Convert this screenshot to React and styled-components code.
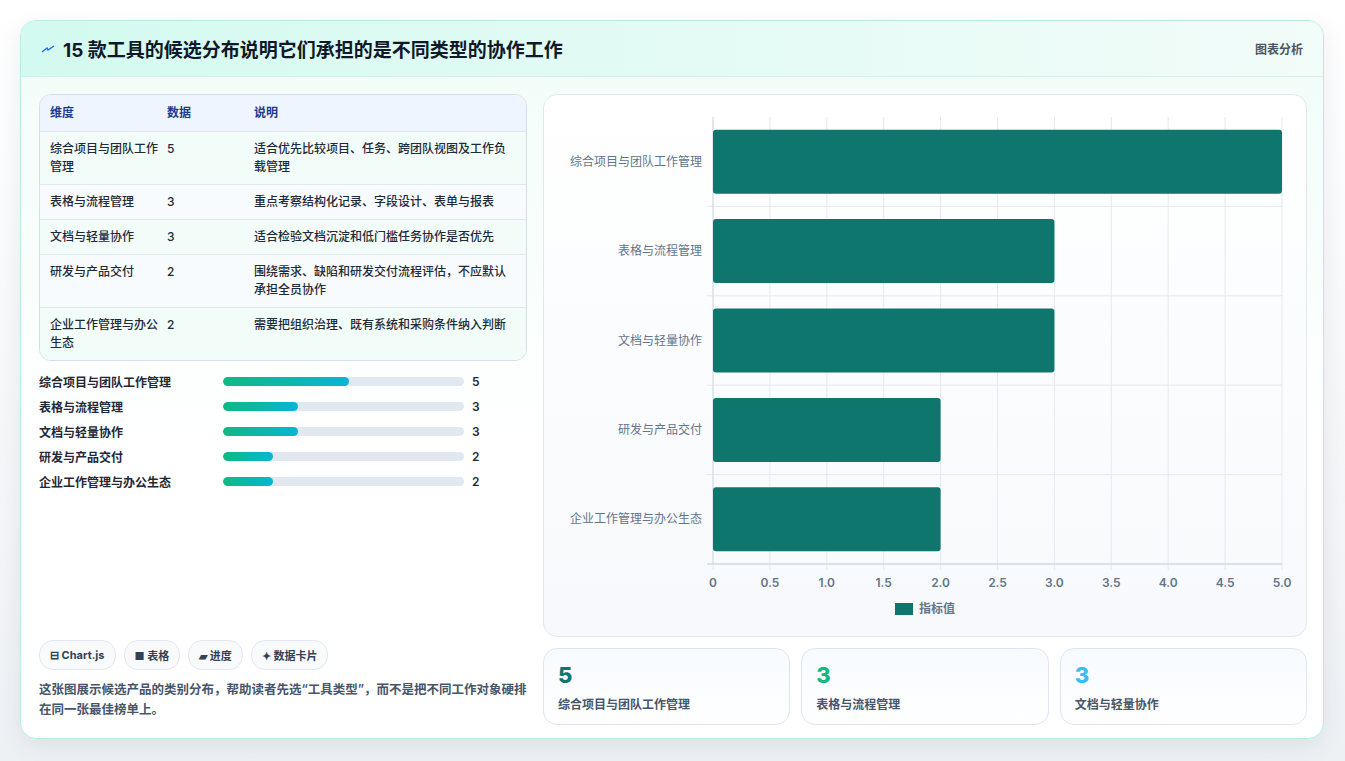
import styled, { createGlobalStyle } from "styled-components";

const Global = createGlobalStyle`
  body { margin: 0; background: #f3f5f7; font-family: Inter, "Noto Sans CJK SC", sans-serif; }
`;

const rows = [
  { name: "综合项目与团队工作管理", value: 5, note: "适合优先比较项目、任务、跨团队视图及工作负载管理" },
  { name: "表格与流程管理", value: 3, note: "重点考察结构化记录、字段设计、表单与报表" },
  { name: "文档与轻量协作", value: 3, note: "适合检验文档沉淀和低门槛任务协作是否优先" },
  { name: "研发与产品交付", value: 2, note: "围绕需求、缺陷和研发交付流程评估，不应默认承担全员协作" },
  { name: "企业工作管理与办公生态", value: 2, note: "需要把组织治理、既有系统和采购条件纳入判断" },
];

const Page = styled.div`
  width: 1345px;
  height: 761px;
  padding: 20px;
  box-sizing: border-box;
  background: linear-gradient(180deg, #ffffff 0%, #eef1f4 100%);
`;

const Card = styled.div`
  width: 1304px;
  height: 719px;
  box-sizing: border-box;
  border: 1px solid #b9ecdf;
  border-radius: 16px;
  background: linear-gradient(180deg, #f0fdf8 0%, #ffffff 60%);
  box-shadow: 0 8px 24px rgba(15, 40, 60, 0.08);
  overflow: hidden;
  display: flex;
  flex-direction: column;
`;

const Header = styled.div`
  height: 55px;
  flex: none;
  display: flex;
  align-items: center;
  justify-content: space-between;
  padding: 0 20px 0 20px;
  background: linear-gradient(90deg, #d3faf0 0%, #e6fbf5 60%, #f2fcf9 100%);
  border-bottom: 1px solid #d3f1e8;
`;

const Title = styled.h1`
  margin: 0;
  font-size: 19px;
  font-weight: 700;
  color: #111827;
  display: flex;
  align-items: center;
  gap: 8px;
`;

const HeaderTag = styled.span`
  font-size: 12px;
  color: #4b5563;
  font-weight: 600;
`;

const Body = styled.div`
  flex: 1;
  display: grid;
  grid-template-columns: 488px 1fr;
  gap: 16px;
  padding: 17px 18px 18px 18px;
  min-height: 0;
`;

const Left = styled.div`
  display: flex;
  flex-direction: column;
  min-height: 0;
`;

const Table = styled.div`
  border: 1px solid #d5dee9;
  border-radius: 12px;
  overflow: hidden;
  background: #fff;
`;

const Row = styled.div`
  display: grid;
  grid-template-columns: 117px 87px 1fr;
  padding: ${(p) => (p.$head ? "9px 10px" : "8px 10px")};
  min-height: ${(p) => (p.$head ? "15px" : "18px")};
  align-items: start;
  font-size: 12px;
  line-height: 18px;
  color: ${(p) => (p.$head ? "#1e3a8a" : "#1f2937")};
  font-weight: ${(p) => (p.$head ? 600 : 500)};
  background: ${(p) => (p.$head ? "#eef5fe" : p.$alt ? "#f7fbfd" : "#f2fdf9")};
  border-top: ${(p) => (p.$head ? "none" : "1px solid #e0e7ef")};
`;

const Bars = styled.div`
  display: flex;
  flex-direction: column;
  gap: 7px;
  margin-top: 11px;
`;

const BarRow = styled.div`
  display: grid;
  grid-template-columns: 176px 241px 1fr;
  gap: 0 8px;
  align-items: center;
  font-size: 12px;
  font-weight: 600;
  color: #1f2937;
  height: 18px;
`;

const Track = styled.div`
  height: 9px;
  border-radius: 5px;
  background: #e2e8f0;
  overflow: hidden;
`;

const Fill = styled.div`
  height: 100%;
  border-radius: 5px;
  background: linear-gradient(90deg, #10b981, #06b6d4);
`;

const Footer = styled.div`
  margin-top: auto;
  display: flex;
  flex-direction: column;
  gap: 10px;
`;

const Tags = styled.div`
  display: flex;
  gap: 8px;
`;

const Tag = styled.span`
  font-size: 11px;
  font-weight: 700;
  color: #334155;
  padding: 6px 10px;
  border: 1px solid #e2e8f0;
  border-radius: 14px;
  background: #f8fafc;
  display: inline-flex;
  align-items: center;
  gap: 4px;
`;

const Desc = styled.p`
  margin: 0;
  font-size: 12.5px;
  line-height: 20px;
  color: #475569;
  font-weight: 600;
`;

const Right = styled.div`
  display: flex;
  flex-direction: column;
  gap: 11px;
  min-height: 0;
`;

const ChartPanel = styled.div`
  height: 543px;
  box-sizing: border-box;
  border: 1px solid #e2e8f0;
  border-radius: 14px;
  background: linear-gradient(180deg, #ffffff 0%, #f7f9fc 100%);
  position: relative;
`;

const Stats = styled.div`
  display: grid;
  grid-template-columns: repeat(3, 1fr);
  gap: 11px;
  flex: 1;
`;

const Stat = styled.div`
  border: 1px solid #dbe6f2;
  border-radius: 14px;
  background: linear-gradient(180deg, #f7faff 0%, #ffffff 100%);
  padding: 12px 14px;
  display: flex;
  flex-direction: column;
  gap: 6px;
`;

const StatValue = styled.div`
  font-size: 22px;
  font-weight: 800;
  color: ${(p) => p.$color};
  line-height: 28px;
`;

const StatLabel = styled.div`
  font-size: 12px;
  font-weight: 600;
  color: #475569;
`;

function Chart() {
  const x0 = 169, x1 = 738, y0 = 22, y1 = 469;
  const band = (y1 - y0) / 5;
  const sx = (v) => x0 + ((x1 - x0) * v) / 5;
  const ticks = [0, 0.5, 1, 1.5, 2, 2.5, 3, 3.5, 4, 4.5, 5];
  return (
    <svg width="762" height="543" style={{ display: "block" }}>
      {ticks.map((t) => (
        <line key={t} x1={sx(t)} x2={sx(t)} y1={y0} y2={y1 + 6} stroke="#e5e9f0" />
      ))}
      {rows.map((r, i) => (
        <line key={i} x1={x0 - 6} x2={x1} y1={y0 + band * (i + 1)} y2={y0 + band * (i + 1)} stroke="#e5e9f0" />
      ))}
      <line x1={x0} x2={x0} y1={y0} y2={y1} stroke="#d5dbe3" />
      <line x1={x0 - 6} x2={x1} y1={y1} y2={y1} stroke="#c9d1dc" />
      {rows.map((r, i) => {
        const cy = y0 + band * i + band / 2;
        return (
          <g key={r.name}>
            <rect x={x0} y={cy - 32} width={sx(r.value) - x0} height={64} rx="3" fill="#0f766e" />
            <text x={x0 - 11} y={cy + 4} textAnchor="end" fontSize="12" fill="#64748b" fontFamily="Inter, 'Noto Sans CJK SC', sans-serif">{r.name}</text>
          </g>
        );
      })}
      {ticks.map((t) => (
        <text key={t} x={sx(t)} y={y1 + 23} textAnchor="middle" fontSize="12" fontWeight="600" fill="#64748b" fontFamily="Inter, sans-serif">
          {t === 0 ? "0" : t.toFixed(1)}
        </text>
      ))}
      <rect x="351" y="508" width="18" height="12" fill="#0f766e" />
      <text x="375" y="518" fontSize="12" fontWeight="600" fill="#64748b" fontFamily="Inter, 'Noto Sans CJK SC', sans-serif">指标值</text>
    </svg>
  );
}

export default function App() {
  return (
    <Page>
      <Global />
      <Card>
        <Header>
          <Title>
            <svg width="14" height="14" viewBox="0 0 14 14">
              <path d="M1 10 L6 6 L7 8 L13 4" fill="none" stroke="#2563eb" strokeWidth="1.4" />
            </svg>
            15 款工具的候选分布说明它们承担的是不同类型的协作工作
          </Title>
          <HeaderTag>图表分析</HeaderTag>
        </Header>
        <Body>
          <Left>
            <Table>
              <Row $head>
                <span>维度</span>
                <span>数据</span>
                <span>说明</span>
              </Row>
              {rows.map((r, i) => (
                <Row key={r.name} $alt={i % 2 === 1}>
                  <span>{r.name}</span>
                  <span>{r.value}</span>
                  <span>{r.note}</span>
                </Row>
              ))}
            </Table>
            <Bars>
              {rows.map((r) => (
                <BarRow key={r.name}>
                  <span>{r.name}</span>
                  <Track>
                    <Fill style={{ width: `${(r.value / 9.6) * 100}%` }} />
                  </Track>
                  <span>{r.value}</span>
                </BarRow>
              ))}
            </Bars>
            <Footer>
              <Tags>
                <Tag>⊟ Chart.js</Tag>
                <Tag>■ 表格</Tag>
                <Tag>▰ 进度</Tag>
                <Tag>✦ 数据卡片</Tag>
              </Tags>
              <Desc>这张图展示候选产品的类别分布，帮助读者先选“工具类型”，而不是把不同工作对象硬排在同一张最佳榜单上。</Desc>
            </Footer>
          </Left>
          <Right>
            <ChartPanel>
              <Chart />
            </ChartPanel>
            <Stats>
              <Stat>
                <StatValue $color="#0f766e">5</StatValue>
                <StatLabel>综合项目与团队工作管理</StatLabel>
              </Stat>
              <Stat>
                <StatValue $color="#10b981">3</StatValue>
                <StatLabel>表格与流程管理</StatLabel>
              </Stat>
              <Stat>
                <StatValue $color="#38bdf8">3</StatValue>
                <StatLabel>文档与轻量协作</StatLabel>
              </Stat>
            </Stats>
          </Right>
        </Body>
      </Card>
    </Page>
  );
}
